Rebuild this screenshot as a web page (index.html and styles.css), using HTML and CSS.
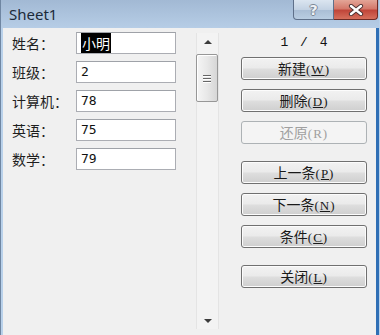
FILE: index.html
```html
<html>
<head>
    <link rel="stylesheet" href="styles.css">
</head>

<body>
    <div class="window">
        <!-- Title bar -->
        <div class="titlebar">
            <span class="title">Sheet1</span>
            <div class="caption-buttons">
                <div class="cap-btn help">?</div>
                <div class="cap-btn close">
                    <svg width="16" height="12" viewBox="0 0 16 12">
                        <path d="M3 2 L13 10 M13 2 L3 10" stroke="#4a3030" stroke-width="4.2" stroke-linecap="round"/>
                        <path d="M3 2 L13 10 M13 2 L3 10" stroke="#ffffff" stroke-width="2.4" stroke-linecap="round"/>
                    </svg>
                </div>
            </div>
        </div>

        <div class="client">
            <!-- Record fields -->
            <div class="fields">
                <label>姓名：</label>
                <div class="field"><span class="selected">小明</span></div>
                <label>班级：</label>
                <div class="field">2</div>
                <label>计算机：</label>
                <div class="field">78</div>
                <label>英语：</label>
                <div class="field">75</div>
                <label>数学：</label>
                <div class="field">79</div>
            </div>

            <!-- Record scrollbar -->
            <div class="scrollbar">
                <div class="arrow up"></div>
                <div class="thumb"><span></span><span></span><span></span></div>
                <div class="track"></div>
                <div class="arrow down"></div>
            </div>

            <!-- Actions -->
            <div class="actions">
                <div class="counter">1 / 4</div>
                <button>新建<span class="key">(<u>W</u>)</span></button>
                <button>删除<span class="key">(<u>D</u>)</span></button>
                <button disabled>还原<span class="key">(R)</span></button>
                <button class="spaced">上一条<span class="key">(<u>P</u>)</span></button>
                <button>下一条<span class="key">(<u>N</u>)</span></button>
                <button>条件<span class="key">(<u>C</u>)</span></button>
                <button class="spaced">关闭<span class="key">(<u>L</u>)</span></button>
            </div>
        </div>
    </div>
</body>
</html>
```

FILE: styles.css
```css
body {
    margin: 0;
    font-family: "Noto Sans CJK SC", sans-serif;
    background-color: #f0f0f0;
}

.window {
    width: 380px;
    height: 335px;
    box-sizing: border-box;
    display: flex;
    flex-direction: column;
    background-color: #b9d1ea;
    border-left: 1px solid #6f86a2;
    border-right: 1px solid #b9d1ea;
    padding: 0 0 0 2px;
    box-shadow: inset -3px 0 0 #2f6fb5;
    overflow: hidden;
}

.titlebar {
    height: 28px;
    display: flex;
    align-items: flex-start;
    background: linear-gradient(#a2b9d4, #b6cde6);
    margin-left: -2px;
    margin-right: 0;
    padding-left: 8px;
    padding-right: 1px;
}

.title {
    font-family: "Noto Sans", sans-serif;
    font-size: 15px;
    color: #1c2a3a;
    line-height: 28px;
}

.caption-buttons {
    margin-left: auto;
    display: flex;
}

.cap-btn {
    height: 20px;
    box-sizing: border-box;
    display: flex;
    align-items: center;
    justify-content: center;
    border: 1px solid #5f708a;
    border-top: none;
}

.help {
    width: 41px;
    border-radius: 0 0 0 4px;
    background: linear-gradient(#dbe5f0, #c3d2e3 50%, #a9bdd5 51%, #b9cde2);
    color: #eef2f6;
    font-family: "DejaVu Sans", sans-serif;
    font-weight: bold;
    font-size: 14px;
    text-shadow: 1px 0 0 #7d8896, -1px 0 0 #7d8896, 0 1px 0 #7d8896, 0 -1px 0 #7d8896;
}

.close {
    width: 44px;
    border-left: none;
    border-color: #6e2a24;
    border-radius: 0 0 4px 0;
    background: linear-gradient(#e3a597, #d4796b 45%, #c0463a 55%, #d66f5c);
}

.client {
    flex: 1;
    display: flex;
    background-color: #f0f0f0;
    margin-right: 3px;
}

.fields {
    width: 176px;
    padding: 4px 0 0 9px;
    display: grid;
    grid-template-columns: 64px 100px;
    grid-auto-rows: 22px;
    row-gap: 7px;
    align-content: start;
}

label {
    font-size: 14px;
    color: #1e1e1e;
    line-height: 22px;
}

.field {
    box-sizing: border-box;
    background-color: white;
    border: 1px solid #abadb3;
    border-top-color: #9fa2a8;
    padding: 0 4px;
    font-family: "DejaVu Sans Mono", monospace;
    font-size: 13px;
    line-height: 20px;
    color: #111;
}

.selected {
    background-color: #000;
    color: #fff;
    font-family: "Noto Sans CJK SC", sans-serif;
    font-size: 14px;
    padding: 0 1px;
}

.scrollbar {
    width: 23px;
    margin: 5px 0 6px 8px;
    box-sizing: border-box;
    display: flex;
    flex-direction: column;
    background-color: #f3f3f3;
    border-left: 1px solid #e4e4e4;
    border-right: 1px solid #e4e4e4;
}

.arrow {
    height: 17px;
    display: flex;
    align-items: center;
    justify-content: center;
}

.arrow::after {
    content: "";
    border-left: 4px solid transparent;
    border-right: 4px solid transparent;
}

.up::after {
    border-bottom: 4px solid #3c3c3c;
}

.down::after {
    border-top: 4px solid #3c3c3c;
}

.thumb {
    height: 48px;
    margin: 4px 0 0 -1px;
    box-sizing: border-box;
    border: 1px solid #979797;
    border-radius: 2px;
    background: linear-gradient(90deg, #f5f5f5, #e8e8e8 50%, #d6d6d6);
    box-shadow: inset 1px 1px 0 #ffffff;
    display: flex;
    flex-direction: column;
    justify-content: center;
    align-items: center;
    gap: 2px;
}

.thumb span {
    width: 8px;
    height: 1px;
    background-color: #666;
    box-shadow: 0 1px 0 #fff;
}

.track {
    flex: 1;
}

.actions {
    width: 126px;
    margin-left: 22px;
    padding-top: 7px;
    display: flex;
    flex-direction: column;
}

.counter {
    font-family: "Liberation Mono", monospace;
    font-size: 13px;
    text-align: center;
    white-space: pre;
    color: #111;
    height: 22px;
    line-height: 16px;
    word-spacing: 4px;
}

button {
    height: 23px;
    margin-bottom: 9px;
    padding: 0;
    border: 1px solid #707070;
    border-radius: 3px;
    background: linear-gradient(#f2f2f2, #ebebeb 45%, #dddddd 55%, #cfcfcf);
    box-shadow: inset 0 0 0 1px #fcfcfc;
    font-family: "Noto Sans CJK SC", sans-serif;
    font-size: 14px;
    line-height: 20px;
    color: #1a1a1a;
}

button.spaced {
    margin-top: 8px;
}

button:disabled {
    border-color: #adb2b5;
    background: #f4f4f4;
    box-shadow: none;
    color: #a0a0a0;
}

.key {
    font-family: "Liberation Serif", serif;
    font-size: 13px;
    letter-spacing: 1px;
}
```
